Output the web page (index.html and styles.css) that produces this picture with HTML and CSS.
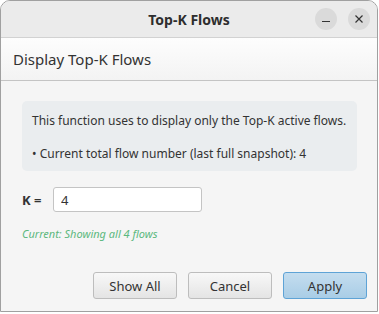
FILE: index.html
```html
<!DOCTYPE html>
<html lang="en">
<head>
    <meta charset="UTF-8">
    <title>Top-K Flows</title>
    <link rel="stylesheet" href="styles.css">
</head>
<body>
    <div class="window">
        <div class="titlebar">
            <span class="title">Top-K Flows</span>
            <div class="wm-buttons">
                <span class="wm-btn">
                    <svg width="10" height="10" viewBox="0 0 10 10"><path d="M1 7.5h8" stroke="#333" stroke-width="1.2"/></svg>
                </span>
                <span class="wm-btn">
                    <svg width="10" height="10" viewBox="0 0 10 10"><path d="M1.5 1.5l7 7M8.5 1.5l-7 7" stroke="#333" stroke-width="1.2"/></svg>
                </span>
            </div>
        </div>
        <div class="header">Display Top-K Flows</div>
        <div class="content">
            <div class="info-box">
                <p>This function uses to display only the Top-K active flows.</p>
                <p>&bull; Current total flow number (last full snapshot): 4</p>
            </div>
            <div class="k-row">
                <label for="kInput">K =</label>
                <input type="text" id="kInput" value="4">
            </div>
            <p class="status">Current: Showing all 4 flows</p>
            <div class="actions">
                <button class="btn">Show All</button>
                <button class="btn">Cancel</button>
                <button class="btn primary">Apply</button>
            </div>
        </div>
    </div>
</body>
</html>
```
FILE: styles.css
```css
body {
    margin: 0;
    background-color: #fff;
    font-family: "Noto Sans", "Open Sans", sans-serif;
    color: #333;
}
.window {
    width: 376px;
    height: 310px;
    border: 1px solid #a0a0a0;
    border-radius: 10px 10px 0 0;
    overflow: hidden;
    background-color: #f5f5f5;
    display: flex;
    flex-direction: column;
}
.titlebar {
    position: relative;
    height: 36px;
    background-color: #ebebeb;
    border-bottom: 1px solid #d2d2d2;
    display: flex;
    align-items: center;
    justify-content: center;
}
.title {
    font-weight: bold;
    font-size: 14px;
    color: #2e2e2e;
}
.wm-buttons {
    position: absolute;
    right: 7px;
    top: 7px;
    display: flex;
    gap: 11px;
}
.wm-btn {
    width: 22px;
    height: 22px;
    border-radius: 50%;
    background-color: #dadada;
    display: flex;
    align-items: center;
    justify-content: center;
}
.header {
    height: 42px;
    padding-left: 12px;
    font-size: 15px;
    line-height: 42px;
    color: #333;
    background: linear-gradient(#fdfdfd, #f3f3f3);
    border-bottom: 1px solid #c4c4c4;
}
.content {
    flex: 1;
    padding: 20px 10px 0 21px;
    display: flex;
    flex-direction: column;
}
.info-box {
    width: 335px;
    height: 70px;
    padding-left: 10px;
    box-sizing: border-box;
    background-color: #eaedef;
    border-radius: 5px;
    font-size: 12px;
}
.info-box p {
    margin: 0;
}
.info-box p:first-child {
    padding-top: 11px;
}
.info-box p + p {
    padding-top: 16px;
}
.k-row {
    margin-top: 16px;
    display: flex;
    align-items: center;
}
.k-row label {
    font-weight: bold;
    font-size: 13px;
    width: 31px;
}
.k-row input {
    width: 149px;
    height: 25px;
    box-sizing: border-box;
    border: 1px solid #c4c4c4;
    border-radius: 3px;
    padding: 0 7px;
    font-family: "Noto Sans", sans-serif;
    font-size: 13px;
    color: #333;
}
.status {
    margin: 14px 0 0;
    font-size: 11px;
    font-style: italic;
    color: #5cb87e;
}
.actions {
    margin-top: 31px;
    display: flex;
    justify-content: flex-end;
    gap: 11px;
}
.btn {
    width: 84px;
    height: 27px;
    border: 1px solid #bdbdbd;
    border-radius: 3px;
    background: linear-gradient(#f8f8f8, #e4e4e4);
    font-family: "Noto Sans", sans-serif;
    font-size: 13px;
    color: #333;
}
.btn.primary {
    background: linear-gradient(#c4ddef, #a9cde6);
    border-color: #5ea3d6;
}
```
